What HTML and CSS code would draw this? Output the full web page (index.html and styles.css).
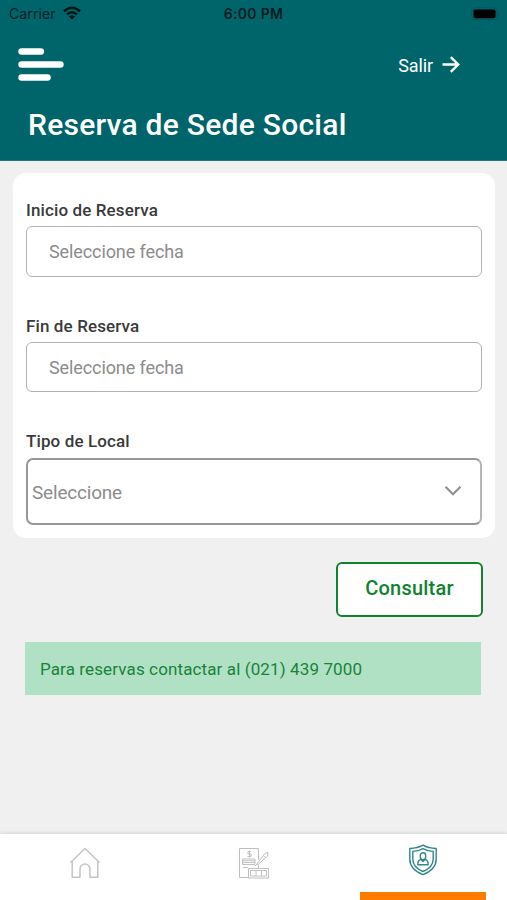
FILE: index.html
```html
<!DOCTYPE html>
<html lang="es">
<head>
<meta charset="utf-8">
<title>Reserva de Sede Social</title>
<link rel="stylesheet" href="styles.css">
</head>
<body>
<div class="app">
  <header class="header">
    <div class="status">
      <div class="carrier"><span class="carrier-name">Carrier</span>
        <svg class="wifi" width="18" height="14" viewBox="0 0 18 14" fill="none" stroke="#061416" stroke-width="2.5"><path d="M1 5.3Q9-1.8 17 5.3M4 8.5Q9 4 14 8.5"/><path d="M9 13.6 5.9 10.5Q9 8 12.1 10.5Z" fill="#061416" stroke="none"/></svg>
      </div>
      <span class="time">6:00 PM</span>
      <svg class="battery" width="30" height="14" viewBox="0 0 30 14"><rect x=".8" y=".8" width="25.4" height="12" rx="3.5" fill="none" stroke="#07535a"/><rect x="2.5" y="2.5" width="22" height="8.7" rx="1.7" fill="#000"/><path d="M27.5 4.7q2 2 0 4z" fill="#07535a"/></svg>
    </div>
    <div class="toolbar">
      <svg class="menu" width="46" height="34" viewBox="0 0 46 34" stroke="#fff" stroke-width="6.6" stroke-linecap="round"><path d="M3.6 3.5H22.8M3.6 16.5H42.4M3.6 29.5H29.5"/></svg>
      <a class="logout"><span class="logout-text">Salir</span>
        <svg width="18" height="17" viewBox="0 0 18 17" fill="none" stroke="#fff" stroke-width="2.4"><path d="M.5 8.5H16.2M8.8 1.2 16.2 8.5 8.8 15.8"/></svg>
      </a>
    </div>
    <h1 class="title"><span>Reserva de Sede Social</span></h1>
  </header>
  <main class="content">
    <section class="card">
      <div class="field">
        <div class="label"><span>Inicio de Reserva</span></div>
        <div class="input"><span>Seleccione fecha</span></div>
      </div>
      <div class="field">
        <div class="label"><span>Fin de Reserva</span></div>
        <div class="input"><span>Seleccione fecha</span></div>
      </div>
      <div class="field">
        <div class="label label-select"><span>Tipo de Local</span></div>
        <div class="select"><span>Seleccione</span>
          <svg width="18" height="12" viewBox="0 0 18 12" fill="none" stroke="#929292" stroke-width="2.2"><path d="M1.5 1.7 9 9.2 16.5 1.7"/></svg>
        </div>
      </div>
    </section>
    <button class="submit"><span>Consultar</span></button>
    <div class="notice"><span>Para reservas contactar al (021) 439 7000</span></div>
  </main>
  <nav class="tabs">
    <a class="tab">
      <svg width="32" height="32" viewBox="0 0 32 32" fill="none" stroke="#c4c4c4" stroke-width="1.5" stroke-linejoin="round"><path d="M1.5 15.5 16 1.5 30.5 15.5M3.2 14V30.2H11V22a5 5 0 0 1 10 0v8.2h7.8V14"/></svg>
    </a>
    <a class="tab">
      <svg width="32" height="32" viewBox="0 0 32 32" fill="none" stroke="#c0c0c0" stroke-width="1"><path d="M20.5 13V1.5H1.5V30.5H10M20.5 18v3M10.5 21.5H30.5V31H10.5z"/><path d="M12.5 23.5H28.5V29H12.5zM18 23.5V29M23.5 23.5V29M4.5 12H17V17.5H4.5zM4.5 13.8H17M4.5 15.6H17M5 20.5H10"/><path d="M13 4.5H10V7H13V9.5H9.5M11.5 3.5V10.5M18.5 17.5 27 6.5 30 5.5 29.5 9 20.5 17.2zM25 8 28 11M18.5 17.5 17 19"/></svg>
    </a>
    <a class="tab tab-active">
      <svg width="30" height="32" viewBox="0 0 30 32" fill="none" stroke="#30868b" stroke-width="1.4" stroke-linejoin="round"><path d="M15 1.2C11 3.6 6.5 4.4 1.8 4.5V15C1.8 22.5 7 27.5 15 30.7 23 27.5 28.2 22.5 28.2 15V4.5C23.5 4.4 19 3.6 15 1.2Z"/><path d="M15 4.6C11.7 6.4 8.3 7.2 4.8 7.4V15C4.8 21 8.6 24.8 15 27.5 21.4 24.8 25.2 21 25.2 15V7.4C21.7 7.2 18.3 6.4 15 4.6Z"/><path d="M12.3 11.5a2.7 2.7 0 0 1 5.4 0V13a2.7 2.7 0 0 1-5.4 0zM12.8 15.4C10.8 16 9.8 17 9.8 20.7H20.2C20.2 17 19.2 16 17.2 15.4L15 17.4z"/></svg>
    </a>
  </nav>
</div>
</body>
</html>
```
FILE: styles.css
```css
* { box-sizing: border-box; }
body { margin: 0; background: #f0f0f0; font-family: Roboto, "Liberation Sans", sans-serif; }
svg { display: block; flex: none; }
span { white-space: nowrap; }
.app { width: 507px; height: 900px; display: flex; flex-direction: column; overflow: hidden; }
.header { height: 161px; background: #00656b; color: #fff; flex: none; border-bottom: 1px solid #23777d; }
.status { height: 28px; display: grid; grid-template-columns: 1fr auto 1fr; align-items: center; padding: 0 6px 0 9px; font-family: Inter, sans-serif; color: #061c1e; }
.carrier { display: flex; align-items: center; gap: 7px; font-size: 14px; margin-top: -1px; }
.carrier-name { letter-spacing: 0.1px; }
.wifi { margin-top: -1px; }
.time { font-size: 14px; font-weight: 600; letter-spacing: 0.3px; margin: -2px 3px 0 0; }
.battery { justify-self: end; margin-top: -1px; }
.toolbar { height: 72px; display: flex; justify-content: space-between; align-items: center; padding: 0 47px 0 18px; }
.menu { margin-top: 1px; }
.logout { display: flex; align-items: center; gap: 9px; font-size: 18px; letter-spacing: -0.1px; }
.logout-text { padding-top: 2px; }
.title { margin: 0; padding-left: 28px; font-size: 30px; font-weight: 500; line-height: 50px; letter-spacing: 0.25px; }
.content { flex: 1; display: flex; flex-direction: column; padding: 12px 12px 0 13px; }
.card { height: 365px; background: #fff; border-radius: 13px; padding: 27px 13px 0; }
.field { margin-bottom: 39px; }
.label { height: 26px; line-height: 20px; font-size: 17px; font-weight: 500; color: #3a3a3a; letter-spacing: 0.12px; }
.label-select { height: 27px; }
.input { height: 51px; border: 1.5px solid #b2b2b2; border-radius: 6px; display: flex; align-items: center; padding-left: 22px; font-size: 18px; color: #8c8c8c; letter-spacing: -0.1px; }
.field + .field .input { height: 50px; }
.select { height: 67px; border: 2px solid #979797; border-right-color: #b5b5b5; border-radius: 7px; display: flex; align-items: center; justify-content: space-between; padding: 1px 18px 0 4px; font-size: 19px; color: #8c8c8c; letter-spacing: -0.2px; }
.select svg { margin-top: -2px; }
.submit { align-self: flex-end; width: 147px; height: 55px; margin: 24px 12px 0 0; padding: 0 0 4px; background: #fff; border: 2px solid #108330; border-radius: 6px; font: 500 20px Roboto, sans-serif; color: #108330; letter-spacing: 0.22px; }
.notice { height: 53px; margin: 25px 14px 0 12px; padding: 0 0 0 15px; background: #b1e1c5; color: #178437; display: flex; align-items: center; font-size: 17px; letter-spacing: 0.12px; }
.tabs { height: 66px; flex: none; background: #fff; display: grid; grid-template-columns: repeat(3, 1fr); box-shadow: 0 -1px 3px rgba(0,0,0,.12); }
.tab { display: flex; flex-direction: column; align-items: center; padding-top: 13px; }
.tab-active { padding-top: 10px; border-bottom: 8px solid #ff7b00; margin: 0 21px 0 22px; }
```
